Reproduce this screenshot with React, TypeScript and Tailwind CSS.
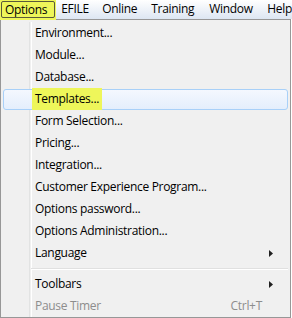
const font = { fontFamily: '"Open Sans", "Noto Sans", sans-serif' };

type Item = { label: string; sub?: boolean; shortcut?: string; disabled?: boolean; hot?: boolean };

const items: Item[] = [
  { label: "Environment..." },
  { label: "Module..." },
  { label: "Database..." },
  { label: "Templates...", hot: true },
  { label: "Form Selection..." },
  { label: "Pricing..." },
  { label: "Integration..." },
  { label: "Customer Experience Program..." },
  { label: "Options password..." },
  { label: "Options Administration..." },
  { label: "Language", sub: true },
];

const tail: Item[] = [
  { label: "Toolbars", sub: true },
  { label: "Pause Timer", shortcut: "Ctrl+T", disabled: true },
];

function Arrow() {
  return (
    <svg width="4" height="7" viewBox="0 0 4 7" className="block">
      <path d="M0 0 L4 3.5 L0 7 Z" fill="#202020" />
    </svg>
  );
}

function Row({ item }: { item: Item }) {
  return (
    <div className="relative flex h-[22px] items-center">
      {item.hot ? (
        <div className="absolute inset-x-[0px] top-[1px] bottom-[0px] rounded-[3px] border border-[#a8d0f8] bg-gradient-to-b from-[#f4f8fe] to-[#e4eefc]" />
      ) : null}
      <span
        className={
          "relative ml-[29px] px-[3px] text-[12px] leading-[22px] tracking-[-0.3px] " +
          (item.disabled ? "text-[#8d8d8d] " : "text-[#000] ") +
          (item.hot ? "bg-[#eef65a]" : "")
        }
      >
        {item.label}
      </span>
      <span className="relative ml-auto mr-[26px] text-[12px] tracking-[-0.3px] text-[#8d8d8d]">{item.shortcut}</span>
      {item.sub ? (
        <span className="absolute right-[15px] top-[8px]">
          <Arrow />
        </span>
      ) : null}
    </div>
  );
}

export default function App() {
  return (
    <div className="h-[318px] w-[292px] overflow-hidden bg-white" style={font}>
      {/* barra de menú */}
      <div className="relative z-10 flex h-[19px] items-start bg-gradient-to-b from-[#ffffff] to-[#dde6f2] text-[12px] tracking-[-0.3px] text-black">
        <div className="h-[20px] w-[57px] bg-[#eef65a] pl-[1px] pt-[1px] pr-[1px]">
          <div className="flex h-[17px] items-center rounded-[2px] border border-[#5a5a3a] px-[3px] leading-none">Options</div>
        </div>
        <div className="ml-[5px] flex h-[18px] items-center whitespace-nowrap leading-none">
          <span className="w-[41px]">EFILE</span>
          <span className="w-[49px]">Online</span>
          <span className="w-[58px]">Training</span>
          <span className="w-[58px]">Window</span>
          <span>Help</span>
        </div>
      </div>

      {/* menú desplegable */}
      <div className="w-[291px] border border-[#979797] bg-[#f0f0f0] px-[2px] pt-[2px] pb-[0px]">
        <div className="relative">
          <div className="pointer-events-none absolute left-[26px] top-0 bottom-0 w-[2px] border-l border-[#e2e3e3] bg-[#f0f0f0] shadow-[1px_0_0_#ffffff]" />
          {items.map((it) => (
            <Row key={it.label} item={it} />
          ))}
          <div className="relative flex h-[9px] items-center">
            <div className="ml-[28px] h-[2px] w-full border-t border-b border-t-[#e0e0e0] border-b-white" />
          </div>
          {tail.map((it) => (
            <Row key={it.label} item={it} />
          ))}
        </div>
      </div>
    </div>
  );
}
